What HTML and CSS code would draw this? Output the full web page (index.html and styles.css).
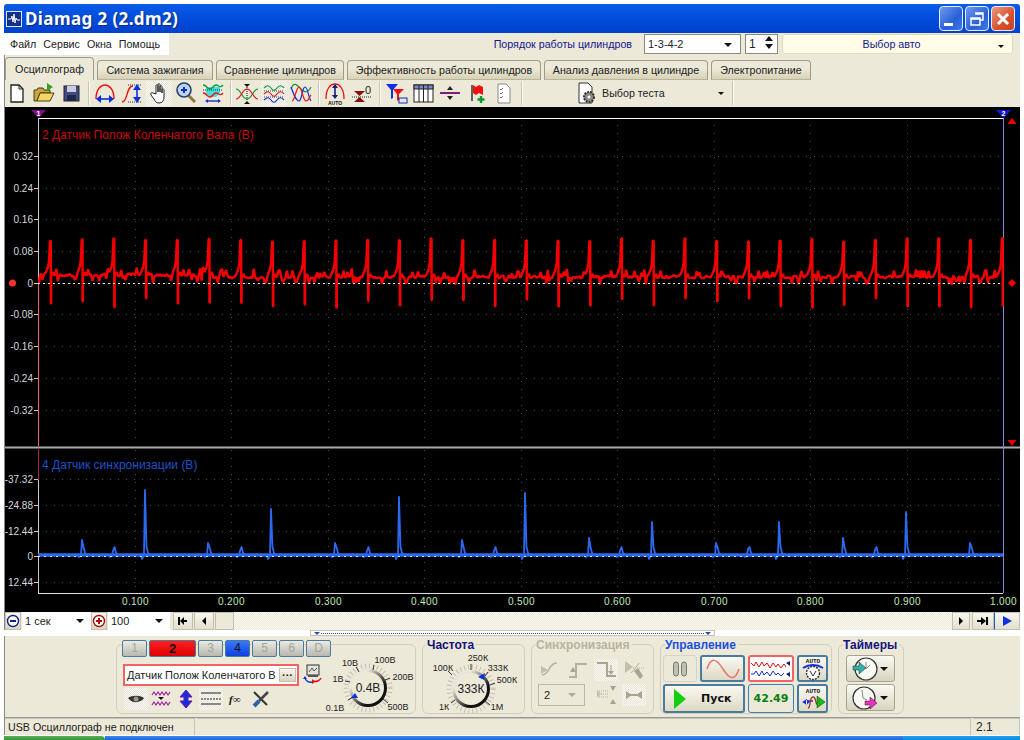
FILE: index.html
```html
<!DOCTYPE html>
<html lang="en">
<head>
    <meta charset="UTF-8">
    <meta name="viewport" content="width=device-width, initial-scale=1.0">
    <title>Diamag 2</title>
    <link rel="stylesheet" href="styles.css">
</head>
<body>
<div class="window">
    <!-- title bar -->
    <div class="titlebar">
        <svg class="app-icon" viewBox="0 0 16 16"><rect x="0.5" y="0.5" width="15" height="15" fill="#12308c" stroke="#dfe6ff"/><path d="M2 8h3l1-3 1 6 1-8 1 9 1-5 1 2h3" fill="none" stroke="#fff"/></svg>
        <span class="title-text">Diamag 2 (2.dm2)</span>
        <div class="win-btn win-min"><span class="min-bar"></span></div>
        <div class="win-btn win-max">
            <svg viewBox="0 0 16 16" width="16" height="16"><path d="M6 2h8v7h-3M2 7h9v7H2z M2 8h9 M6 3h8" fill="none" stroke="#fff" stroke-width="1.5"/></svg>
        </div>
        <div class="win-btn win-close">
            <svg viewBox="0 0 16 16" width="16" height="16"><path d="M3 3l10 10M13 3L3 13" stroke="#fff" stroke-width="3"/></svg>
        </div>
    </div>

    <!-- menu and car selection -->
    <div class="menubar">
        <div class="menu">
            <span>Файл</span><span>Сервис</span><span>Окна</span><span>Помощь</span>
        </div>
        <span class="cyl-label">Порядок работы цилиндров</span>
        <div class="combo cyl-order">1-3-4-2<i class="arrow"></i></div>
        <div class="combo cyl-spin">1
            <span class="spin"><i class="spin-up"></i><i class="spin-down"></i></span>
        </div>
        <div class="car-select"><span>Выбор авто</span><i class="arrow small"></i></div>
    </div>

    <!-- tabs -->
    <div class="tabs">
        <div class="tab active">Осциллограф</div>
        <div class="tab">Система зажигания</div>
        <div class="tab">Сравнение цилиндров</div>
        <div class="tab">Эффективность работы цилиндров</div>
        <div class="tab">Анализ давления в цилиндре</div>
        <div class="tab">Электропитание</div>
    </div>

    <!-- toolbar -->
    <div class="toolbar">
        <div class="tool"><svg viewBox="0 0 24 24"><path d="M6 4h8l4 4v13H6z" fill="#fff" stroke="#222" stroke-width="1.3"/><path d="M14 4v4h4" fill="none" stroke="#222"/></svg></div>
        <div class="tool"><svg viewBox="0 0 24 24"><path d="M2 20V9h3l1-2h5l1 2h6v3H8l-3 8z" fill="#c9a53a" stroke="#4a3a10"/><path d="M5 20l3-8h14l-4 8z" fill="#f4d668" stroke="#4a3a10"/><path d="M15 2l6 4-6 4z" fill="#2aa52a"/></svg></div>
        <div class="tool"><svg viewBox="0 0 24 24"><rect x="5" y="5" width="15" height="15" fill="#3e4a80" stroke="#222"/><rect x="8" y="5" width="9" height="6" fill="#c8cce0"/><rect x="8" y="14" width="9" height="6" fill="#20264a"/></svg></div>
        <div class="sep"></div>
        <div class="tool"><svg viewBox="0 0 24 24"><path d="M3 18C3 8 8 4 12 4s9 4 9 14" fill="none" stroke="#f01010" stroke-width="1.4"/><path d="M5 18h14" stroke="#1030e0" stroke-width="1.6"/><path d="M3 18l5-4v8zM21 18l-5-4v8z" fill="#1030e0"/></svg></div>
        <div class="tool"><svg viewBox="0 0 24 24"><path d="M2 21c6 0 4-16 11-16" fill="none" stroke="#f01010" stroke-width="1.3"/><path d="M8 4h13M8 21h13" stroke="#333" stroke-dasharray="1 1"/><path d="M17 7v11" stroke="#1030e0" stroke-width="1.6"/><path d="M17 3l4 6h-8zM17 22l4-6h-8z" fill="#1030e0"/></svg></div>
        <div class="tool pressed"><svg viewBox="0 0 24 24"><path d="M9 13V5c0-2 2-2 2 0v6V4c0-2 2-2 2 0v7-5c0-2 2-2 2 0v6-3c0-2 2-1 2 0v7c0 4-2 6-5 6s-4-2-5-4l-3-4c-1-2 1-3 2-2z" fill="#fff" stroke="#222"/></svg></div>
        <div class="tool"><svg viewBox="0 0 24 24"><path d="M14 14l7 7" stroke="#8a7a40" stroke-width="3"/><circle cx="10" cy="9" r="7" fill="#bcd4f4" stroke="#26406a" stroke-width="1.6"/><path d="M7 9h6M10 6v6" stroke="#1030c0" stroke-width="2"/></svg></div>
        <div class="tool"><svg viewBox="0 0 24 24"><path d="M5 6h14v6l-4 4h-6l-4-4z" fill="#40e0e0"/><path d="M2 4c4 0 4 4 7 4s3-4 6-4 4 4 7 0" fill="none" stroke="#0a9a30" stroke-width="1.3"/><path d="M2 9h20" stroke="#333" stroke-dasharray="1 1"/><path d="M2 12c4 0 4 4 7 4s3-4 6-4 4 4 7 0" fill="none" stroke="#f01010" stroke-width="1.3"/><path d="M6 20h12" stroke="#1030e0" stroke-width="1.4"/><path d="M4 20l3-2v4zM20 20l-3-2v4z" fill="#1030e0"/></svg></div>
        <div class="sep"></div>
        <div class="tool"><svg viewBox="0 0 24 24"><path d="M1 8c5 0 6 10 11 10s6-10 11-10" fill="none" stroke="#0a9a30" stroke-width="1.2"/><path d="M1 18C6 18 7 8 12 8s6 10 11 10" fill="none" stroke="#f01010" stroke-width="1.2"/><path d="M12 6l-3-3h6zM12 20l-3 3h6z" fill="#111"/><path d="M12 6v14" stroke="#111" stroke-dasharray="1 1"/></svg></div>
        <div class="tool pressed"><svg viewBox="0 0 24 24"><path d="M2 7c3-3 5-3 7 0s4 3 6 0 5-3 7 0" fill="none" stroke="#0a9a30" stroke-width="1.2"/><path d="M2 13c3-3 5-3 7 0s4 3 6 0 5-3 7 0" fill="none" stroke="#f01010" stroke-width="1.2"/><path d="M2 19c3-3 5-3 7 0s4 3 6 0 5-3 7 0" fill="none" stroke="#1030e0" stroke-width="1.2"/><path d="M2 10h20M2 16h20" stroke="#444" stroke-dasharray="1 1"/></svg></div>
        <div class="tool"><svg viewBox="0 0 24 24"><path d="M2 8C5 0 8 4 12 8s7 4 10-2" fill="none" stroke="#0a9a30" stroke-width="1.2"/><path d="M2 6c3 8 5 14 8 14s3-14 6-14 3 10 6 14" fill="none" stroke="#1030e0" stroke-width="1.2"/><path d="M3 20c3 0 4-14 7-14s4 14 7 14 3-4 5-6" fill="none" stroke="#f01010" stroke-width="1.2"/></svg></div>
        <div class="sep"></div>
        <div class="tool"><svg viewBox="0 0 24 24"><path d="M3 18C3 8 7 3 12 3s9 5 9 15" fill="none" stroke="#f01010" stroke-width="1.3"/><path d="M12 6v10" stroke="#10207a" stroke-width="1.6"/><path d="M12 3l3 4H9zM12 18l3-4H9z" fill="#10207a"/><text x="12" y="23.5" class="tool-auto">AUTO</text></svg></div>
        <div class="tool"><svg viewBox="0 0 24 24"><path d="M4 10h11l-5.500 5zM4 21h11l-5.500-5z" fill="#8a1010"/><path d="M2 16h20" stroke="#222" stroke-dasharray="1 1"/><text x="18" y="13" class="tool-zero">0</text></svg></div>
        <div class="sep"></div>
        <div class="tool"><svg viewBox="0 0 24 24"><path d="M2 3h12l-5 6v8l-2 1V9z" fill="#1030e0"/><path d="M9 8h11l-5 5v6l-2 1v-7z" fill="#f01010"/><rect x="15" y="17" width="8" height="5" fill="#dfe6f8" stroke="#1030a0"/></svg></div>
        <div class="tool"><svg viewBox="0 0 24 24"><rect x="3" y="4" width="19" height="17" fill="#fff" stroke="#222"/><rect x="3" y="4" width="19" height="4" fill="#7a8ac8" stroke="#222"/><path d="M8 4v17M12.500 4v17M17 4v17" stroke="#222"/></svg></div>
        <div class="tool"><svg viewBox="0 0 24 24"><path d="M2 12h20" stroke="#7a207a" stroke-width="2"/><path d="M12 5l-3 4h6zM12 19l-3-4h6z" fill="#222"/></svg></div>
        <div class="tool"><svg viewBox="0 0 24 24"><path d="M7 4v16" stroke="#333" stroke-width="1.5"/><path d="M8 4l3 2 3-2 4 2v8l-4-2-3 2-3-2z" fill="#f01010"/><path d="M16 15v7M12.500 18.500h7" stroke="#0a9a30" stroke-width="2.4"/></svg></div>
        <div class="tool"><svg viewBox="0 0 24 24"><path d="M6 3h8l4 4v15H6z" fill="#fff" stroke="#888"/><path d="M8 8l1 1 2-2M8 12l1 1 2-2M8 16l1 1 2-2" fill="none" stroke="#777"/></svg></div>
        <div class="sep"></div>
        <div class="test-select">
            <svg viewBox="0 0 24 24" width="24" height="24"><path d="M4 2h9l4 4v16H4z" fill="#fff" stroke="#333"/><circle cx="14" cy="16" r="5" fill="#8a8a80" stroke="#333" stroke-dasharray="2 1" stroke-width="2"/><circle cx="14" cy="16" r="1.500" fill="#fff"/></svg>
            <span>Выбор теста</span>
            <i class="arrow small"></i>
        </div>
        <div class="sep"></div>
    </div>

    <!-- scope, grid and traces are drawn by script.js -->
    <div class="scope">
        <svg id="scopeSvg" viewBox="5 107 1015 505" width="1015" height="505"></svg>
    </div>

    <!-- time base and scroll row -->
    <div class="scroll-row">
        <div class="round-btn"><svg viewBox="0 0 14 14"><circle cx="7" cy="7" r="5.500" fill="#fff" stroke="#10207a" stroke-width="1.4"/><path d="M4 7h6" stroke="#10207a" stroke-width="2"/></svg></div>
        <div class="combo time-combo">1 сек<i class="arrow"></i></div>
        <div class="round-btn"><svg viewBox="0 0 14 14"><circle cx="7" cy="7" r="5.500" fill="#fff" stroke="#a01010" stroke-width="1.4"/><path d="M4 7h6M7 4v6" stroke="#a01010" stroke-width="2"/></svg></div>
        <div class="combo zoom-combo">100<i class="arrow"></i></div>
        <div class="nav-btn first"><svg viewBox="0 0 12 10" width="12" height="10"><path d="M1 1h2v8H1zM3 5l4-4v3h3v2H7v3z"/></svg></div>
        <div class="nav-btn prev"><svg viewBox="0 0 12 10" width="12" height="10"><path d="M8 1v8L4 5z"/></svg></div>
        <div class="nav-btn thumb"></div>
        <div class="track"></div>
        <div class="nav-btn next"><svg viewBox="0 0 12 10" width="12" height="10"><path d="M4 1v8l4-4z"/></svg></div>
        <div class="nav-btn last"><svg viewBox="0 0 14 10" width="14" height="10"><path d="M1 4h4V1l5 4-5 4V6H1zM10 1h2v8h-2z"/></svg></div>
        <div class="nav-btn play"><svg viewBox="0 0 12 10" width="12" height="10"><path d="M2 0l9 5-9 5z" fill="#1030e0"/></svg></div>
    </div>

    <div class="splitter"><i class="split-mark"></i><span class="split-dots"></span><i class="split-mark"></i></div>

    <!-- control panels -->
    <div class="panel">
        <div class="group channels">
            <div class="channel-side">
                <div class="channel-row">
                    <div class="ch">1</div>
                    <div class="ch ch-red">2</div>
                    <div class="ch">3</div>
                    <div class="ch ch-blue">4</div>
                    <div class="ch">5</div>
                    <div class="ch">6</div>
                    <div class="ch">D</div>
                </div>
                <div class="sensor-row">
                    <div class="sensor-input"><span>Датчик Полож Коленчатого В</span><b class="dots">···</b></div>
                    <svg viewBox="0 0 22 22" width="22" height="22"><rect x="5" y="1" width="12" height="10" fill="#dfe3d8" stroke="#333"/><path d="M7 8l3-4 2 3 3-3" stroke="#555" fill="none"/><rect x="6" y="11" width="10" height="2" fill="#555"/><path d="M11 18a6 5 0 0 1-8-4" fill="none" stroke="#1030c0" stroke-width="1.5"/><path d="M11 17a6 5 0 0 0 8-3" fill="none" stroke="#e01010" stroke-width="1.5"/><path d="M1 15l2-3 2 3z" fill="#1030c0"/><path d="M10 15v5l3-2z" fill="#e01010"/></svg>
                </div>
                <div class="icon-row">
                    <div class="chan-tool pressed"><svg viewBox="0 0 20 20"><path d="M2 9c4-3 12-3 16 0-3 5-12 6-16 0z" fill="#333"/><circle cx="10" cy="10" r="2.500" fill="#999"/></svg></div>
                    <div class="chan-tool"><svg viewBox="0 0 20 20"><path d="M1 6l2-3 2 3 2-3 2 3 2-3 2 3 2-3 2 3 2-3" fill="none" stroke="#a020a0" stroke-width="1.200"/><path d="M1 16l2-3 2 3 2-3 2 3 2-3 2 3 2-3 2 3 2-3" fill="none" stroke="#a020a0" stroke-width="1.200"/><path d="M7 8h6l-3 3z" fill="#111"/></svg></div>
                    <div class="chan-tool"><svg viewBox="0 0 20 20"><path d="M10 1l6 7h-4v4h4l-6 7-6-7h4V8H4z" fill="#1030e0" stroke="#7a10a0"/></svg></div>
                    <div class="chan-tool pressed"><svg viewBox="0 0 20 20"><path d="M0 4h20M0 15h20" stroke="#222" stroke-width="1.200"/><path d="M0 10h20" stroke="#222" stroke-width="1.200" stroke-dasharray="2 1"/></svg></div>
                    <div class="chan-tool"><svg viewBox="0 0 20 20"><text x="3" y="14" class="fx-text">f∞</text></svg></div>
                    <div class="chan-tool"><svg viewBox="0 0 20 20"><path d="M3 3l13 13" stroke="#333" stroke-width="2"/><path d="M17 3L8 12" stroke="#444" stroke-width="2.500"/><path d="M8 12l-5 5" stroke="#3060b0" stroke-width="4"/></svg></div>
                </div>
            </div>
            <svg class="dial" viewBox="0 0 94 72" width="94" height="72">
                <defs>
                    <linearGradient id="ringGrad" x1="0" y1="0" x2="1" y2="1">
                        <stop offset="0.250" stop-color="#e8e6da"/>
                        <stop offset="0.700" stop-color="#111"/>
                    </linearGradient>
                </defs>
                <circle cx="46" cy="43" r="22" class="dial-ticks"/>
                <circle cx="46" cy="43" r="17.500" class="dial-ring"/>
                <path d="M31 52l-5 3M28 37l-5-1M37 27l-3-5M51 25l1-5M63 35l5-2M61 54l5 4" class="dial-marks"/>
                <path d="M33 48l3 5h-7z" fill="#1030e0"/>
                <text x="46" y="47" class="dial-value">0.4В</text>
                <text x="28" y="21" class="dial-label">10В</text>
                <text x="63" y="18" class="dial-label">100В</text>
                <text x="16" y="37" class="dial-label">1В</text>
                <text x="81" y="35" class="dial-label">200В</text>
                <text x="13" y="66" class="dial-label">0.1В</text>
                <text x="76" y="65" class="dial-label">500В</text>
            </svg>
        </div>

        <div class="group freq">
            <div class="group-title">Частота</div>
            <svg viewBox="0 0 101 68" width="101" height="68">
                <circle cx="48" cy="44" r="22" class="dial-ticks"/>
                <circle cx="48" cy="44" r="17.500" class="dial-ring"/>
                <path d="M32 55l-4 3M29 30l-4-4M48 25v-6M62 31l3-4M67 40l5-2M62 56l5 4" class="dial-marks"/>
                <path d="M62 28l-1 7-6-3z" fill="#1030e0"/>
                <text x="48" y="48" class="dial-value">333К</text>
                <text x="55" y="16" class="dial-label">250К</text>
                <text x="20" y="26" class="dial-label">100К</text>
                <text x="75" y="26" class="dial-label">333К</text>
                <text x="84" y="38" class="dial-label">500К</text>
                <text x="21" y="65" class="dial-label">1К</text>
                <text x="74" y="65" class="dial-label">1М</text>
            </svg>
        </div>

        <div class="group sync">
            <div class="group-title dim">Синхронизация</div>
            <div class="sync-grid">
                <div class="sync-tool"><svg viewBox="0 0 22 22"><path d="M3 16c8 0 6-12 15-12" fill="none" stroke="#b4b09c" stroke-width="1.500"/><path d="M2 7l7 4-7 4z" fill="#c4c0ac"/></svg></div>
                <div class="sync-tool"><svg viewBox="0 0 22 22"><path d="M2 18h7V5h11" fill="none" stroke="#b4b09c" stroke-width="2"/><path d="M6 12l-3-5h6z" fill="#a8a490" transform="rotate(180 6 10)"/></svg></div>
                <div class="sync-tool pressed"><svg viewBox="0 0 22 22"><path d="M2 4h10v13h9" fill="none" stroke="#a8a490" stroke-width="2"/><path d="M16 6v6" stroke="#a8a490"/><path d="M13 12h6l-3 4z" fill="#a8a490"/></svg></div>
                <div class="sync-tool"><svg viewBox="0 0 22 22"><path d="M2 2l8 6-8 6z" fill="#c4c0ac"/><path d="M8 14c4-4 5-6 8-10" stroke="#b4b09c" fill="none"/><path d="M11 12l4-3 5 8-3 3z" fill="#a8a490"/><path d="M10 9h12" stroke="#b4b09c" stroke-dasharray="1 1"/></svg></div>
                <div class="combo sync-combo">2<i class="arrow gray"></i></div>
                <div class="sync-tool"><svg viewBox="0 0 22 22"><path d="M2 7l12 0M2 10h12M4 13h10" stroke="#b4b09c" stroke-dasharray="1 1"/><path d="M15 2h6l-3 5zM15 20h6l-3-5z" fill="#a8a490"/><path d="M2 6l4 4-4 4z" fill="#c4c0ac"/></svg></div>
                <div class="sync-tool pressed"><svg viewBox="0 0 22 22"><path d="M3 11h16" stroke="#a8a490" stroke-width="2"/><path d="M3 7l6 4-6 4zM19 7l-6 4 6 4z" fill="#a8a490"/></svg></div>
            </div>
        </div>

        <div class="group control">
            <div class="group-title bright">Управление</div>
            <div class="control-grid">
                <div class="ctl ctl-flat"><svg viewBox="0 0 20 20" width="20" height="20"><rect x="3.500" y="3" width="5" height="14" rx="2.500" fill="#c0bfb4" stroke="#777"/><rect x="11.500" y="3" width="5" height="14" rx="2.500" fill="#c0bfb4" stroke="#777"/></svg></div>
                <div class="ctl"><svg viewBox="0 0 36 22" width="36" height="22"><path d="M2 11C6-1 11 0 18 11s12 12 16 0" fill="none" stroke="#f07070" stroke-width="1.500"/></svg></div>
                <div class="ctl ctl-red"><svg viewBox="0 0 42 22" width="42" height="22"><path d="M1 5l3 3 2-4 3 5 3-5 2 4 3-3 3 5 3-5 3 4 2-3 3 4 3-4 2 3" fill="none" stroke="#e01010"/><path d="M36 5l4-2v5z" fill="#10207a"/><path d="M1 16h3l2-3 3 5 3-5 2 4 3-3 3 4 3-5 3 4 2-2 3 3 3-3" fill="none" stroke="#1030e0"/><path d="M36 16l4-2v5z" fill="#10207a"/></svg></div>
                <div class="ctl ctl-small"><svg viewBox="0 0 26 26" width="26" height="26"><text x="13" y="7" class="ctl-auto">AUTO</text><path d="M3 12c6-4 14-4 20 0" fill="none" stroke="#1030e0" stroke-width="2"/><circle cx="13" cy="17" r="6.500" fill="#fff" stroke="#333" stroke-width="1.500" stroke-dasharray="2 1"/><path d="M10 15l3 5 3-5" fill="none" stroke="#333"/></svg></div>
                <div class="ctl ctl-start"><svg viewBox="0 0 14 20" width="14" height="20"><path d="M1 0l12 10L1 20z" fill="#10d010"/></svg><span>Пуск</span></div>
                <div class="ctl ctl-value">42.49</div>
                <div class="ctl ctl-small"><svg viewBox="0 0 26 26" width="26" height="26"><text x="13" y="7" class="ctl-auto">AUTO</text><path d="M7 15h6" stroke="#1030e0" stroke-width="1.500"/><path d="M2 16l5-3v6zM10 16l-4-3v6z" fill="#1030e0"/><path d="M8 22c3 0 1-11 5-11s2 11 5 5" fill="none" stroke="#a03020" stroke-width="1.300"/><path d="M17 10l8 6-8 6z" fill="#10c010" stroke="#222" stroke-width="0.500"/></svg></div>
            </div>
        </div>

        <div class="group timers">
            <div class="group-title">Таймеры</div>
            <div class="timer-btn">
                <svg viewBox="0 0 26 26" width="26" height="26"><circle cx="14" cy="13" r="11" fill="#fafaf4" stroke="#333" stroke-width="1.200"/><path d="M14 6v7l4-4" fill="none" stroke="#888"/><path d="M1 10h6V6l7 6-7 6v-4H1z" fill="#30b0a8" stroke="#222" stroke-width="0.500"/></svg>
                <i class="arrow"></i>
            </div>
            <div class="timer-btn">
                <svg viewBox="0 0 26 26" width="26" height="26"><circle cx="12" cy="13" r="11" fill="#fafaf4" stroke="#333" stroke-width="1.200"/><path d="M10 5l1 8 4 2" fill="none" stroke="#888"/><path d="M13 16h5v-4l7 6-7 6v-4h-5z" fill="#f030c0" stroke="#222" stroke-width="0.500"/></svg>
                <i class="arrow"></i>
            </div>
        </div>
    </div>

    <!-- status bar -->
    <div class="statusbar">
        <div class="status-cell status-main">USB Осциллограф не подключен</div>
        <div class="status-cell status-fill"></div>
        <div class="status-cell status-ver">2.1</div>
    </div>

    <div class="taskbar"><div class="start"></div><div class="task-main"></div><div class="tray"></div></div>
</div>
<script src="script.js"></script>
</body>
</html>
```

FILE: styles.css
```css
:root {
    --face: #ece9d8;
    --group-line: #d3cfbb;
    --btn-blue: #3c7fb1;
    --ui-font: 'Liberation Sans', Arial, sans-serif;
}

* {
    box-sizing: border-box;
    margin: 0;
    padding: 0;
}

body {
    background-color: white;
    font-family: var(--ui-font);
    font-size: 10.7px;
    color: #222;
    overflow: hidden;
}

.window {
    display: flex;
    flex-direction: column;
    width: 1016px;
    height: 740px;
    margin: 0 0 0 4px;
    padding-top: 4px;
    background-color: white;
}

/* title bar */
.titlebar {
    display: flex;
    align-items: center;
    height: 29px;
    flex: none;
    padding: 0 5px 0 2px;
    background: linear-gradient(#0a5ce8 0%, #0450e0 35%, #0048d8 70%, #0042c8 100%);
    border-radius: 3px 3px 0 0;
}

.app-icon {
    width: 16px;
    height: 16px;
    margin-right: 3px;
}

.title-text {
    flex: 1;
    color: white;
    font-family: 'Noto Sans', sans-serif;
    font-size: 17px;
    font-weight: bold;
    letter-spacing: 0.4px;
    text-shadow: 1px 1px 1px #0a2a80;
}

.win-btn {
    display: flex;
    align-items: center;
    justify-content: center;
    width: 24px;
    height: 25px;
    margin-left: 2px;
    border: 1px solid #e8eefc;
    border-radius: 4px;
    background: linear-gradient(135deg, #6f9af0, #2a5fd8 60%, #3f78e8);
}

.win-min {
    align-items: flex-end;
    justify-content: flex-start;
    padding: 0 0 4px 4px;
}

.min-bar {
    width: 9px;
    height: 3px;
    background-color: white;
}

.win-close {
    background: linear-gradient(135deg, #ec9a80, #d8502c 60%, #c84020);
}

/* menu row */
.menubar {
    display: flex;
    align-items: center;
    height: 22px;
    flex: none;
    padding-right: 7px;
    background-color: var(--face);
}

.menu {
    display: flex;
    align-items: center;
    gap: 7px;
    width: 165px;
    height: 22px;
    padding-left: 6px;
    background-color: white;
}

.cyl-label {
    margin-left: auto;
    margin-right: 12px;
    color: #14148c;
}

.combo {
    position: relative;
    display: flex;
    align-items: center;
    height: 20px;
    padding-left: 3px;
    background-color: white;
    border: 1px solid #8c8a7c;
    font-size: 11px;
}

.arrow {
    position: absolute;
    right: 8px;
    top: 8px;
    border-left: 4px solid transparent;
    border-right: 4px solid transparent;
    border-top: 4px solid #111;
}

.arrow.small {
    top: 10px;
    border-left-width: 3px;
    border-right-width: 3px;
    border-top-width: 3px;
}

.arrow.gray {
    border-top-color: #aaa;
}

.cyl-order {
    width: 97px;
    margin-right: 4px;
}

.cyl-spin {
    width: 33px;
    margin-right: 4px;
    font-size: 12px;
}

.spin {
    position: absolute;
    right: 4px;
    top: 1px;
    display: flex;
    flex-direction: column;
    gap: 3px;
}

.spin-up {
    border-left: 4px solid transparent;
    border-right: 4px solid transparent;
    border-bottom: 5px solid #111;
}

.spin-down {
    border-left: 4px solid transparent;
    border-right: 4px solid transparent;
    border-top: 5px solid #111;
}

.car-select {
    position: relative;
    width: 231px;
    height: 20px;
    padding-right: 12px;
    line-height: 19px;
    text-align: center;
    color: #14148c;
    background-color: #fffde8;
    border: 1px solid #e0dcc4;
    border-radius: 3px;
}

/* tabs */
.tabs {
    display: grid;
    grid-template-columns: 89px 116px 128px 194px 164px 100px;
    column-gap: 3px;
    align-items: end;
    height: 25px;
    flex: none;
    padding-left: 1px;
    background-color: var(--face);
    box-shadow: inset 1px 0 #888;
}

.tab {
    height: 20px;
    line-height: 19px;
    text-align: center;
    white-space: nowrap;
    background: linear-gradient(var(--face) 40%, #d8d2b4);
    border: 1px solid #a09c88;
    border-bottom: 1px solid #b8b4a0;
    border-radius: 4px 4px 0 0;
}

.tab.active {
    height: 23px;
    line-height: 22px;
    background: var(--face);
    border-bottom: none;
}

/* toolbar */
.toolbar {
    display: flex;
    align-items: center;
    gap: 1px;
    height: 26px;
    flex: none;
    background-color: var(--face);
    box-shadow: inset 1px 0 #888;
}

.tool {
    display: flex;
    align-items: center;
    justify-content: center;
    width: 26px;
    height: 25px;
}

.tool svg {
    width: 24px;
    height: 24px;
}

.pressed {
    background-color: #f6f5ee;
    background-image: repeating-conic-gradient(#e6e4d6 0 25%, #fbfaf4 0 50%);
    background-size: 2px 2px;
}

.tool-auto {
    font: bold 5px var(--ui-font);
    text-anchor: middle;
    fill: #111;
}

.tool-zero {
    font: 11px var(--ui-font);
    text-anchor: middle;
    fill: #222;
}

.sep {
    width: 2px;
    height: 24px;
    margin: 0 1px 0 3px;
    border-left: 1px solid #c8c4b0;
    border-right: 1px solid #fbfaf4;
}

.test-select {
    position: relative;
    display: flex;
    align-items: center;
    width: 203px;
    height: 25px;
    padding-left: 50px;
}

.test-select span {
    margin-left: 3px;
}

.test-select .arrow {
    right: 4px;
    top: 11px;
}

/* scope */
.scope {
    height: 506px;
    flex: none;
    padding-top: 1px;
    background-color: var(--face);
    border-left: 1px solid #888;
}

#scopeSvg {
    display: block;
    background-color: black;
}

.ax-y {
    font: 10px var(--ui-font);
    fill: #d8d8d8;
    text-anchor: end;
}

.ax-x {
    font: 10px var(--ui-font);
    fill: #c0e8b8;
    text-anchor: middle;
    letter-spacing: 0.4px;
}

.trace-title {
    font: 12px var(--ui-font);
}

.flag-text {
    font: bold 7px var(--ui-font);
    fill: white;
    text-anchor: middle;
}

/* time base row */
.scroll-row {
    display: flex;
    align-items: center;
    height: 18px;
    flex: none;
    background-color: var(--face);
    border-left: 1px solid #888;
}

.round-btn {
    display: flex;
    align-items: center;
    justify-content: center;
    width: 16px;
    height: 18px;
    background: linear-gradient(#f8f7f0, #d8d4c0);
    border: 1px solid #c4c0ac;
}

.round-btn svg {
    width: 14px;
    height: 14px;
}

.time-combo,
.zoom-combo {
    height: 18px;
    border: none;
}

.time-combo {
    width: 69px;
    margin-left: 1px;
}

.zoom-combo {
    width: 62px;
    margin: 0 3px 0 1px;
}

.time-combo .arrow,
.zoom-combo .arrow {
    right: 7px;
    top: 7px;
}

.nav-btn {
    display: flex;
    align-items: center;
    justify-content: center;
    flex: none;
    width: 20px;
    height: 18px;
    margin-right: 1px;
    background: linear-gradient(#f8f7f0, #e2dfcc);
    border: 1px solid #c4c0ac;
}

.nav-btn.thumb {
    width: 19px;
    margin-right: 0;
    background: var(--face);
}

.nav-btn.next {
    width: 18px;
    margin-right: 2px;
}

.nav-btn.last {
    width: 22px;
    margin-right: 0;
}

.nav-btn.play {
    width: 26px;
    margin-right: 0;
    border-left: 1px solid #1060d0;
}

.track {
    flex: 1;
    height: 18px;
    background-image: repeating-conic-gradient(#ece9d8 0 25%, #fbfaf4 0 50%);
    background-size: 2px 2px;
}

/* splitter above the panels */
.splitter {
    display: flex;
    align-items: center;
    gap: 1px;
    width: 405px;
    height: 6px;
    flex: none;
    margin-left: 306px;
    padding: 0 3px;
    background-color: white;
    border: 1px solid #c8c4b0;
}

.split-dots {
    flex: 1;
    border-top: 1px dotted #2050c0;
}

.split-mark {
    border-left: 3px solid transparent;
    border-right: 3px solid transparent;
    border-top: 3px solid #2050c0;
}

/* panels */
.panel {
    display: flex;
    align-items: flex-start;
    gap: 6px;
    height: 82px;
    flex: none;
    padding: 8px 0 0 112px;
    background-color: var(--face);
    box-shadow: inset 1px 0 #888;
    border-bottom: 1px solid #999;
}

.group {
    position: relative;
    flex: none;
    height: 70px;
    border: 1px solid var(--group-line);
    border-radius: 6px;
}

.group-title {
    position: absolute;
    top: -7px;
    left: 4px;
    padding-right: 2px;
    background-color: var(--face);
    color: #12127e;
    font-size: 12px;
    font-weight: bold;
    white-space: nowrap;
}

.group-title.dim {
    color: #b8b4a0;
}

.group-title.bright {
    color: #1a50e0;
}

/* channels */
.channels {
    display: flex;
    width: 300px;
}

.channel-side {
    display: flex;
    flex-direction: column;
    flex: none;
    width: 215px;
    padding-left: 5px;
    margin-top: -5px;
}

.channel-row {
    display: flex;
    gap: 2px;
}

.ch {
    width: 25px;
    height: 17px;
    line-height: 15px;
    text-align: center;
    font-size: 12px;
    color: #a4a498;
    background: linear-gradient(#eceae2, #b8b8b0);
    border: 1px solid #4a7a9c;
    border-radius: 2px;
}

.ch-red {
    width: 47px;
    color: #111;
    font-size: 13px;
    font-weight: bold;
    background: linear-gradient(#ff2020, #dc0000);
}

.ch-blue {
    color: #111;
    background: linear-gradient(#3878ff, #1040e0);
}

.sensor-row {
    display: flex;
    align-items: center;
    gap: 3px;
    margin: 7px 0 0 1px;
}

.sensor-input {
    display: flex;
    align-items: center;
    justify-content: space-between;
    width: 176px;
    height: 22px;
    padding: 0 1px 0 2px;
    background-color: white;
    border: 2px solid #f06464;
    font-size: 11px;
    white-space: nowrap;
}

.dots {
    width: 17px;
    height: 14px;
    line-height: 12px;
    text-align: center;
    background: linear-gradient(#f8f7f0, #d8d4c0);
    border: 1px solid #c4c0ac;
}

.icon-row {
    display: flex;
    align-items: center;
    gap: 1px;
    margin: 2px 0 0 2px;
}

.chan-tool {
    display: flex;
    align-items: center;
    justify-content: center;
    width: 24px;
    height: 22px;
}

.chan-tool svg {
    width: 20px;
    height: 20px;
}

.fx-text {
    font: italic bold 11px 'Liberation Serif', serif;
    fill: #111;
}

/* dials */
.dial {
    flex: none;
    margin-left: -10px;
}

.dial-ticks {
    fill: none;
    stroke: #c4c0ac;
    stroke-width: 5;
    stroke-dasharray: 1 3;
}

.dial-ring {
    fill: var(--face);
    stroke: url(#ringGrad);
    stroke-width: 3;
}

.dial-marks {
    fill: none;
    stroke: #333;
}

.dial-value {
    font: 12px var(--ui-font);
    text-anchor: middle;
    fill: #222;
}

.dial-label {
    font: 9px var(--ui-font);
    text-anchor: middle;
    fill: #222;
}

.freq {
    width: 103px;
}

/* sync */
.sync {
    width: 123px;
}

.sync-grid {
    display: grid;
    grid-template-columns: repeat(4, 24px);
    grid-auto-rows: 22px;
    column-gap: 4px;
    row-gap: 3px;
    padding: 14px 0 0 6px;
}

.sync-tool {
    display: flex;
    align-items: center;
    justify-content: center;
}

.sync-tool svg {
    width: 22px;
    height: 22px;
}

.sync-combo {
    grid-column: span 2;
    width: 47px;
    height: 22px;
    padding-left: 5px;
    background-color: transparent;
    border-color: #bdb9a4;
}

/* control */
.control {
    width: 172px;
}

.control-grid {
    display: grid;
    grid-template-columns: 34px 45px 46px 31px;
    grid-template-rows: 27px 29px;
    gap: 2px 3px;
    padding: 10px 0 0 2px;
}

.ctl {
    display: flex;
    align-items: center;
    justify-content: center;
    background: linear-gradient(#faf9f2, #dcd8c4);
    border: 2px solid #4a7a9c;
    border-radius: 3px;
}

.ctl-flat {
    background: var(--face);
    border: 1px solid #d8d4c0;
}

.ctl-red {
    background: white;
    border-color: #f06464;
}

.ctl-start {
    grid-column: span 2;
    justify-content: flex-start;
    padding-left: 8px;
}

.ctl-start span {
    margin-left: 14px;
    font-family: 'DejaVu Sans', sans-serif;
    font-size: 11px;
    font-weight: bold;
    color: #111;
}

.ctl-value {
    color: #0a800a;
    font-family: 'DejaVu Sans', sans-serif;
    font-size: 11px;
    font-weight: bold;
    background: var(--face);
    border: 1px solid var(--btn-blue);
}

.ctl-auto {
    font: bold 6px 'Liberation Mono', monospace;
    text-anchor: middle;
    fill: #222;
}

/* timers */
.timers {
    display: flex;
    flex-direction: column;
    gap: 2px;
    width: 66px;
    padding: 10px 0 0 7px;
}

.timer-btn {
    position: relative;
    display: flex;
    align-items: center;
    width: 49px;
    height: 27px;
    padding-left: 5px;
    background: linear-gradient(#faf9f2, #d8d4c0);
    border: 1px solid #a8a490;
    border-radius: 3px;
}

.timer-btn .arrow {
    top: 11px;
    right: 6px;
}

/* status bar */
.statusbar {
    display: flex;
    gap: 2px;
    height: 17px;
    flex: none;
    background-color: var(--face);
    border-left: 1px solid #888;
}

.status-cell {
    height: 17px;
    line-height: 16px;
    padding-left: 3px;
    border-right: 1px solid #c8c4b0;
    border-top: 1px solid #c8c4b0;
}

.status-main {
    width: 190px;
}

.status-fill {
    flex: 1;
}

.status-ver {
    width: 47px;
    font-size: 12px;
}

/* strip of the desktop taskbar */
.taskbar {
    display: flex;
    flex: 1;
    border-top: 1px solid white;
}

.start {
    width: 101px;
    background: linear-gradient(#58b058, #3a943a);
    border-radius: 0 6px 0 0;
}

.task-main {
    flex: 1;
    background: linear-gradient(#3a8cf0, #1e64d8);
}

.tray {
    width: 117px;
    background: linear-gradient(#18a4f0, #0e8ae0);
}
```

FILE: script.js
```js
const svg = document.getElementById('scopeSvg');
const NS = 'http://www.w3.org/2000/svg';

const X0 = 38;
const X1 = 1003;
const GRID = '#4c4c4c';

function add(tag, attrs, text) {
    const el = document.createElementNS(NS, tag);
    for (const key in attrs) {
        el.setAttribute(key, attrs[key]);
    }
    if (text !== undefined) {
        el.textContent = text;
    }
    svg.appendChild(el);
    return el;
}

// Small seeded generator so the noise is the same on every load
let seed = 7;
function rnd() {
    seed = (seed * 16807) % 2147483647;
    return seed / 2147483647;
}

// Grid
function hLine(y) {
    add('line', { x1: X0, x2: X1, y1: y + 0.5, y2: y + 0.5, stroke: GRID, 'stroke-dasharray': '1 7' });
}

function yLabel(y, text) {
    add('line', { x1: 34, x2: X0, y1: y + 0.5, y2: y + 0.5, stroke: '#ccc' });
    add('text', { x: 33, y: y + 4, class: 'ax-y' }, text);
}

const upper = [[156, '0.32'], [188, '0.24'], [219, '0.16'], [251, '0.08'], [283, '0'],
    [314, '-0.08'], [346, '-0.16'], [378, '-0.24'], [410, '-0.32']];
const lower = [[479, '-37.32'], [505, '-24.88'], [531, '-12.44'], [556, '0'], [582, '12.44']];

upper.concat(lower).forEach(function(row) {
    hLine(row[0]);
    yLabel(row[0], row[1]);
});

for (let i = 1; i <= 10; i++) {
    const x = Math.round(X0 + i * 96.5) + 0.5;
    if (i < 10) {
        add('line', { x1: x, x2: x, y1: 125, y2: 445, stroke: GRID, 'stroke-dasharray': '1 7' });
        add('line', { x1: x, x2: x, y1: 450, y2: 593, stroke: GRID, 'stroke-dasharray': '1 7' });
    }
    add('text', { x: x, y: 605, class: 'ax-x' }, (i / 10).toFixed(3));
}

// Frame lines
add('line', { x1: X0, x2: X1, y1: 118.5, y2: 118.5, stroke: '#fff' });
add('line', { x1: X0, x2: X1, y1: 593.5, y2: 593.5, stroke: '#ddd' });
add('line', { x1: 5, x2: 1020, y1: 447.5, y2: 447.5, stroke: '#aaa', 'stroke-width': 2 });
add('line', { x1: X0 + 0.5, x2: X0 + 0.5, y1: 118, y2: 283, stroke: '#c8c8c8' });
add('line', { x1: X0 + 0.5, x2: X0 + 0.5, y1: 283, y2: 446, stroke: '#f06070' });
add('line', { x1: X0 + 0.5, x2: X0 + 0.5, y1: 449, y2: 480, stroke: '#a02060' });
add('line', { x1: X0 + 0.5, x2: X0 + 0.5, y1: 480, y2: 593, stroke: '#c8c8c8' });
add('line', { x1: X1 + 0.5, x2: X1 + 0.5, y1: 118, y2: 593, stroke: '#8088e0' });

// Titles
add('text', { x: 42, y: 139, class: 'trace-title', fill: '#c80808' }, '2 Датчик Полож Коленчатого Вала (В)');
add('text', { x: 42, y: 469, class: 'trace-title', fill: '#2050c8' }, '4 Датчик синхронизации (В)');

// Red trace
const redPts = [[X0 + 1, 283], [X0 + 2, 276]];
let redX = X0 + 3;
for (let k = 0; k < 31; k++) {
    const sx = 50 + k * 31.73;
    const base = k < 6 ? 275 : 277;
    while (redX < sx - 5) {
        let y = base + (rnd() - 0.5) * 3;
        if (rnd() < 0.28) {
            y += rnd() < 0.5 ? -5 - rnd() * 3 : 4 + rnd() * 3;
        }
        redPts.push([redX, y]);
        redX += 1.4;
    }
    const top = 238 + rnd() * 4;
    const bottom = 298 + rnd() * 10;
    redPts.push([sx - 4, base - 3], [sx - 2, base - 8], [sx - 1, base - 14], [sx, top], [sx + 0.8, top],
        [sx + 0.8, bottom], [sx + 1.2, bottom], [sx + 1.2, base + 1], [sx + 3, base - 3], [sx + 4, base]);
    redX = sx + 5;
}
add('polyline', {
    points: redPts.filter(function(p) { return p[0] <= X1; }).join(' '),
    fill: 'none', stroke: '#f40000', 'stroke-width': 2.4, 'stroke-linejoin': 'bevel'
});
add('line', { x1: X0, x2: X1, y1: 283.5, y2: 283.5, stroke: '#e8e8e8', 'stroke-dasharray': '2 3' });

// Blue trace: each spike is [x, top]
const blueSpikes = [[82, 540], [113, 551], [145, 490], [208, 543], [240, 551], [271, 509],
    [335, 543], [367, 551], [399, 497], [462, 540], [494, 551], [525, 493], [589, 538],
    [620, 551], [652, 522], [716, 543], [748, 549], [779, 522], [843, 538], [875, 550],
    [906, 512], [970, 543]];
const bluePts = [[X0, 555]];
blueSpikes.forEach(function(s) {
    const big = s[1] < 530;
    bluePts.push([s[0] - 4, 555], [s[0] - 3, big ? 559 : 557], [s[0] - 1, 555], [s[0], s[1]],
        [s[0] + 1.5, 547], [s[0] + 3, 553], [s[0] + 5, 555]);
});
bluePts.push([X1, 555]);
add('polyline', {
    points: bluePts.join(' '), fill: 'none', stroke: '#2c68f0', 'stroke-width': 1.8, 'stroke-linejoin': 'round'
});
add('line', { x1: X0, x2: X1, y1: 555, y2: 555, stroke: '#2c68f0', 'stroke-width': 3.4 });
add('line', { x1: X0, x2: X1, y1: 556.5, y2: 556.5, stroke: '#d8e4f8', 'stroke-dasharray': '2 4' });

// Markers
add('circle', { cx: 12.5, cy: 283, r: 3.5, fill: '#f83030' });
add('path', { d: 'M1012 279l4 4-4 4-4-4z', fill: '#f00000' });
add('path', { d: 'M1012 118l4.500 6h-9z', fill: '#f00000' });
add('path', { d: 'M1012 446l4.500-6h-9z', fill: '#e00000' });
add('path', { d: 'M31 110h15l-7.500 8z', fill: '#80108a' });
add('text', { x: 38.5, y: 116, class: 'flag-text' }, '1');
add('path', { d: 'M996 110h15l-7.500 8z', fill: '#1018e0' });
add('text', { x: 1003.5, y: 116, class: 'flag-text' }, '2');
```
